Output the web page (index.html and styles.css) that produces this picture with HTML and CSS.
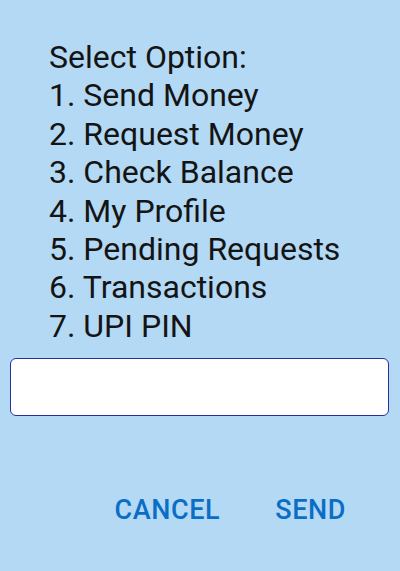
FILE: index.html
```html
<!DOCTYPE html>
<html lang="en">
<head>
  <meta charset="UTF-8">
  <meta name="viewport" content="width=device-width, initial-scale=1.0">
  <title>USSD</title>
  <link rel="stylesheet" href="styles.css">
</head>
<body>
  <div class="dialog">
    <div class="menu">
      <p>Select Option:</p>
      <p>1. Send Money</p>
      <p>2. Request Money</p>
      <p>3. Check Balance</p>
      <p>4. My Profile</p>
      <p>5. Pending Requests</p>
      <p>6. Transactions</p>
      <p>7. UPI PIN</p>
    </div>
    <input type="text" class="reply">
    <div class="actions">
      <button class="btn">CANCEL</button>
      <button class="btn">SEND</button>
    </div>
  </div>
</body>
</html>
```

FILE: styles.css
```css
body {
  margin: 0;
  padding: 0;
  background-color: #b3d9f5;
  font-family: Roboto, sans-serif;
  color: #141414;
}
.dialog {
  height: 571px;
  padding: 38px 11px 0 10px;
  box-sizing: border-box;
}
.menu {
  padding-left: 39px;
}
.menu p {
  margin: 0;
  font-size: 32px;
  line-height: 38.4px;
}
.reply {
  display: block;
  width: 100%;
  height: 58px;
  box-sizing: border-box;
  margin-top: 13px;
  border: 1.5px solid #2b2f9e;
  border-radius: 6px;
  background-color: #fff;
  outline: none;
}
.actions {
  display: flex;
  justify-content: flex-end;
  gap: 55px;
  margin-top: 78px;
  padding-right: 43px;
}
.btn {
  background: none;
  border: none;
  padding: 0;
  font-family: Roboto, sans-serif;
  font-weight: 500;
  font-size: 27px;
  line-height: normal;
  color: #0a6ec6;
  letter-spacing: 0.6px;
}
```
